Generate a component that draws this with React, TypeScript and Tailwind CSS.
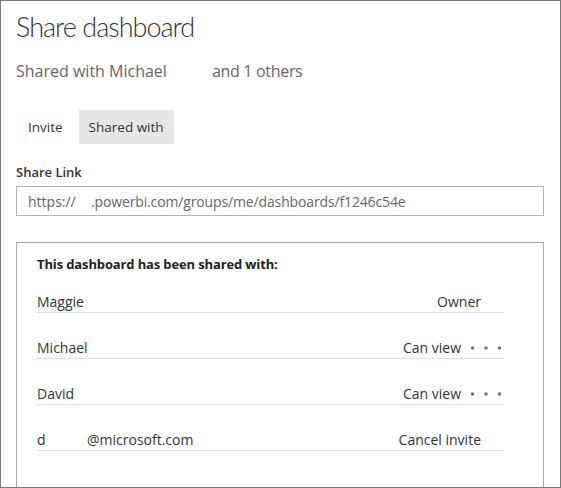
const font = { fontFamily: '"Open Sans", "Noto Sans", Arial, sans-serif' };
const titleFont = { fontFamily: 'Lato, "Open Sans", Arial, sans-serif' };

type Person = { name: string; pad?: boolean; role: string; menu: boolean };

const people: Person[] = [
    { name: 'Maggie', role: 'Owner', menu: false },
    { name: 'Michael', role: 'Can view', menu: true },
    { name: 'David', role: 'Can view', menu: true },
    { name: 'd', pad: true, role: 'Cancel invite', menu: false },
];

function Dots() {
    return (
        <svg width="32" height="6" viewBox="0 0 32 6" className="ml-[9px] shrink-0">
            <circle cx="2.5" cy="3" r="1.7" fill="#6f6f6f" />
            <circle cx="16" cy="3" r="1.7" fill="#6f6f6f" />
            <circle cx="29.5" cy="3" r="1.7" fill="#6f6f6f" />
        </svg>
    );
}

function Row({ person, first }: { person: Person; first: boolean }) {
    return (
        <div
            className={`flex items-center justify-between border-b border-[#dedede] text-[14px] leading-[20px] text-[#333] ${
                first ? 'mt-[19px]' : 'mt-[25px]'
            } ${person.menu ? 'pr-[2px]' : 'pr-[23px]'}`}
        >
            <div className="flex">
                {person.pad ? (
                    <>
                        <span className="inline-block w-[50px]">{person.name}</span>
                        <span>@microsoft.com</span>
                    </>
                ) : (
                    <span>{person.name}</span>
                )}
            </div>
            <div className="flex items-center">
                <span>{person.role}</span>
                {person.menu && <Dots />}
            </div>
        </div>
    );
}

export default function App() {
    return (
        <div
            style={font}
            className="w-[561px] h-[488px] overflow-hidden border border-[#7a7a7a] bg-white pl-[15px] pr-[16px] pt-[8px]"
        >
            <h1 style={titleFont} className="text-[27px] leading-[36px] font-light tracking-[-1px] text-[#333]">
                Share dashboard
            </h1>

            <div className="mt-[15px] text-[16px] leading-[22px] text-[#666]">
                <span className="inline-block w-[196px]">Shared with Michael</span>
                <span className="tracking-[-0.02em]">and 1 others</span>
            </div>

            {/* Tabs */}
            <div className="mt-[28px] flex gap-[6px] pl-[2px] text-[13.5px] text-[#333]">
                <button className="h-[34px] px-[10px]">Invite</button>
                <button className="h-[34px] px-[10px] bg-[#e6e6e6]">Shared with</button>
            </div>

            <div className="mt-[19px] text-[13px] leading-[18px] font-semibold text-[#333]">Share Link</div>

            <div className="mt-[5px] flex h-[30px] items-center border border-[#b3b3b3] pl-[11px] text-[14px] text-[#666]">
                <span className="inline-block w-[63px]">https://</span>
                <span className="tracking-[-0.01em]">.powerbi.com/groups/me/dashboards/f1246c54e</span>
            </div>

            {/* Shared-with list */}
            <div className="mt-[26px] h-[300px] border border-[#a6a6a6] pl-5 pt-[12px]">
                <div className="text-[13px] leading-[18px] font-bold tracking-[-0.01em] text-[#222]">
                    This dashboard has been shared with:
                </div>
                <div className="w-[467px]">
                    {people.map((p, i) => (
                        <Row key={p.name} person={p} first={i === 0} />
                    ))}
                </div>
            </div>
        </div>
    );
}
